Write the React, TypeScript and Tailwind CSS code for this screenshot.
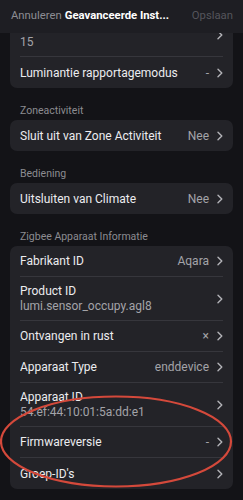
import type { ReactNode } from 'react'

function Chevron() {
  return (
    <svg width="6" height="10" viewBox="0 0 6 10" className="shrink-0">
      <path d="M1 1.2l3.8 3.8L1 8.8" fill="none" stroke="#b3b3b8" strokeWidth="1.4" strokeLinecap="round" strokeLinejoin="round" />
    </svg>
  )
}

function Row({ title, value, sub }: { title: string; value?: ReactNode; sub?: string }) {
  if (sub) {
    return (
      <div className="flex items-center py-[6px]">
        <div className="min-w-0 flex-1">
          <div className="h-[16px] truncate text-[12px] leading-[16px] text-[#ececef]">{title}</div>
          <div className="truncate text-[12px] leading-[15px] text-[#a3a3a8]">{sub}</div>
        </div>
        <Chevron />
      </div>
    )
  }
  return (
    <div className="flex h-[31px] items-center">
      <span className="flex-1 truncate text-[12px] text-[#ececef]">{title}</span>
      {value !== undefined && <span className="mr-[8px] text-[12px] text-[#a3a3a8]">{value}</span>}
      <Chevron />
    </div>
  )
}

function Card({ children }: { children: ReactNode }) {
  return (
    <div className="rounded-[7px] bg-[#232328]">
      <div className="mx-[10px] divide-y divide-[#36363c]">{children}</div>
    </div>
  )
}

function Label({ children }: { children: ReactNode }) {
  return (
    <div className="flex h-[32px] items-end px-[10px] pb-[3px] text-[10.5px] leading-[12px] text-[#8c8c91]">
      {children}
    </div>
  )
}

export default function App() {
  return (
    <div className="relative flex h-[500px] w-[243px] flex-col overflow-hidden bg-[#131317] font-['Roboto',sans-serif]">
      <header className="flex h-[33px] shrink-0 items-center whitespace-nowrap bg-[#1e1e23] pl-[11px] pr-[10px] text-[11.3px]">
        <span className="text-[#8d8d93]">Annuleren</span>
        <span className="ml-[3px] font-bold text-white">Geavanceerde Inst...</span>
        <span className="ml-auto text-[#55555b]">Opslaan</span>
      </header>

      {/* scrolled list, first row title is under the header */}
      <div className="min-h-0 flex-1 overflow-hidden">
        <main className="-mt-[20px] px-[10px]">
          <Card>
            <Row title="" sub="15" />
            <Row title="Luminantie rapportagemodus" value="-" />
          </Card>

          <Label>Zoneactiviteit</Label>
          <Card>
            <Row title="Sluit uit van Zone Activiteit" value="Nee" />
          </Card>

          <Label>Bediening</Label>
          <Card>
            <Row title="Uitsluiten van Climate" value="Nee" />
          </Card>

          <Label>Zigbee Apparaat Informatie</Label>
          <Card>
            <Row title="Fabrikant ID" value="Aqara" />
            <Row title="Product ID" sub="lumi.sensor_occupy.agl8" />
            <Row title="Ontvangen in rust" value="×" />
            <Row title="Apparaat Type" value="enddevice" />
            <Row title="Apparaat ID" sub="54:ef:44:10:01:5a:dd:e1" />
            <Row title="Firmwareversie" value="-" />
            <Row title="Groep-ID's" />
          </Card>
        </main>
      </div>

      <svg className="pointer-events-none absolute left-0 top-0" width="243" height="500" viewBox="0 0 243 500">
        <ellipse cx="116" cy="441.5" rx="115" ry="45" fill="none" stroke="#d4493b" strokeWidth="2.2" />
      </svg>
    </div>
  )
}
